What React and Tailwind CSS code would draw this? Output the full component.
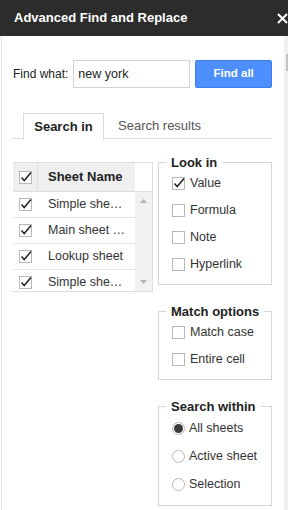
import React from 'react';

const font = { fontFamily: '"Liberation Sans", Arial, sans-serif' };

function Check({ checked }) {
  return (
    <span className="relative w-[13px] h-[13px] shrink-0 border border-[#b8b8b8] bg-white">
      {checked && (
        <svg width="14" height="14" viewBox="0 0 14 14" className="absolute left-[-1px] top-[-2px]">
          <path d="M2.5 7.5 L5.2 10.5 L12 2.5" fill="none" stroke="#222" strokeWidth="1.5" />
        </svg>
      )}
    </span>
  );
}

function Radio({ checked }) {
  return (
    <span className="w-[13px] h-[13px] shrink-0 rounded-full border border-[#b8b8b8] bg-white flex items-center justify-center">
      {checked && <span className="w-[9px] h-[9px] rounded-full bg-[#3a3a3a]" />}
    </span>
  );
}

function Group({ title, children, className }) {
  return (
    <fieldset className={`min-w-0 border border-[#d6d6d6] pl-[13px] ${className}`}>
      <legend className="-ml-[6px] px-[5px] whitespace-nowrap text-[13px] leading-[15px] font-bold text-[#222]">{title}</legend>
      {children}
    </fieldset>
  );
}

const rows = ['Simple she…', 'Main sheet …', 'Lookup sheet', 'Simple she…'];

export default function App() {
  return (
    <div style={font} className="w-[288px] h-[510px] overflow-hidden bg-white text-[#333]">
      <div className="h-[36px] bg-[#2c2c2c] flex items-center justify-between pl-[14px]">
        <span className="text-white text-[13px] font-bold">Advanced Find and Replace</span>
        <svg width="11" height="11" viewBox="0 0 11 11" className="mt-[1px]">
          <path d="M1 1 L10 10 M10 1 L1 10" stroke="#fff" strokeWidth="2" />
        </svg>
      </div>

      <div className="flex h-[474px]">
        <div className="w-[283px] ml-[1px] border-l border-[#e3e3e3] pl-[11px] pr-[12px] flex flex-col">
          <div className="mt-[24px] flex items-center h-[28px]">
            <span className="text-[12px] text-[#222]">Find what:</span>
            <div className="ml-[5px] w-[117px] h-[28px] border border-[#d3d3d3] flex items-center pl-[4px] text-[12.5px] text-[#222]">
              new york
            </div>
            <button className="ml-[5px] flex-1 h-[28px] bg-[#4d8ffd] border border-[#3b7fee] rounded-[2px] text-white text-[11.5px] font-bold">
              Find all
            </button>
          </div>

          <div className="mt-[25px] flex border-b border-[#dcdcdc] h-[26px]">
            <div className="ml-[10px] w-[81px] h-[27px] border border-b-0 border-[#dcdcdc] bg-white flex items-center justify-center text-[13px] font-bold text-[#222]">
              Search in
            </div>
            <div className="pl-[14px] flex items-center text-[13px] text-[#555]">Search results</div>
          </div>

          <div className="mt-[16px] flex items-start gap-[5px]">
            <div className="mt-[7px] w-[140px] border-t border-r border-[#dedede]">
              <div className="flex h-[29px] border-b border-[#dedede]">
                <div className="w-[25px] bg-[#efefef] border-r border-[#dedede] flex items-center justify-center">
                  <Check checked />
                </div>
                <div className="flex-1 bg-[#efefef] flex items-center pl-[10px] text-[13px] font-bold text-[#222]">Sheet Name</div>
                <div className="w-[17px] bg-white" />
              </div>
              <div className="flex h-[100px] overflow-hidden border-b border-[#dedede]">
                <div className="flex-1">
                  {rows.map((r, i) => (
                    <div key={i} className="h-[26px] shrink-0 flex items-center border-b border-[#e3e3e3]">
                      <div className="w-[25px] flex justify-center">
                        <Check checked />
                      </div>
                      <span className="pl-[10px] text-[12.5px] text-[#333] whitespace-nowrap">{r}</span>
                    </div>
                  ))}
                </div>
                <div className="w-[17px] bg-[#f1f1f1] flex flex-col items-center justify-between py-[7px]">
                  <svg width="7" height="4" viewBox="0 0 7 4"><path d="M0 4 L3.5 0 L7 4 Z" fill="#b3b3b3" /></svg>
                  <svg width="7" height="4" viewBox="0 0 7 4"><path d="M0 0 L3.5 4 L7 0 Z" fill="#b3b3b3" /></svg>
                </div>
              </div>
            </div>

            <div className="flex-1 min-w-0 flex flex-col">
              <Group title="Look in" className="pb-[6px]">
                {[['Value', true], ['Formula'], ['Note'], ['Hyperlink']].map(([l, c]) => (
                  <label key={l} className="h-[27px] flex items-center gap-[5px] text-[12.5px] text-[#333]">
                    <Check checked={c} />
                    {l}
                  </label>
                ))}
              </Group>
              <Group title="Match options" className="mt-[19px] pb-[6px]">
                {['Match case', 'Entire cell'].map((l) => (
                  <label key={l} className="h-[27px] flex items-center gap-[5px] text-[12.5px] text-[#333]">
                    <Check />
                    {l}
                  </label>
                ))}
              </Group>
              <Group title="Search within" className="mt-[19px] pb-[7px]">
                {[['All sheets', true], ['Active sheet'], ['Selection']].map(([l, c]) => (
                  <label key={l} className="h-[28px] flex items-center gap-[4px] text-[12.5px] text-[#333]">
                    <Radio checked={c} />
                    {l}
                  </label>
                ))}
              </Group>
            </div>
          </div>

          <div className="mt-[5px] -ml-[12px] -mr-[12px] flex h-[10px] border-t border-[#dedede]">
            <div className="w-[102px]" />
            <div className="w-[62px] border-l border-[#dedede]" />
            <div className="flex-1 border-l border-[#dedede]" />
          </div>
        </div>
        <div className="flex-1 bg-[#f1f1f1] flex justify-end">
          <div className="mt-[18px] w-[2px] h-[17px] bg-[#c3c3c3]" />
        </div>
      </div>
    </div>
  );
}
